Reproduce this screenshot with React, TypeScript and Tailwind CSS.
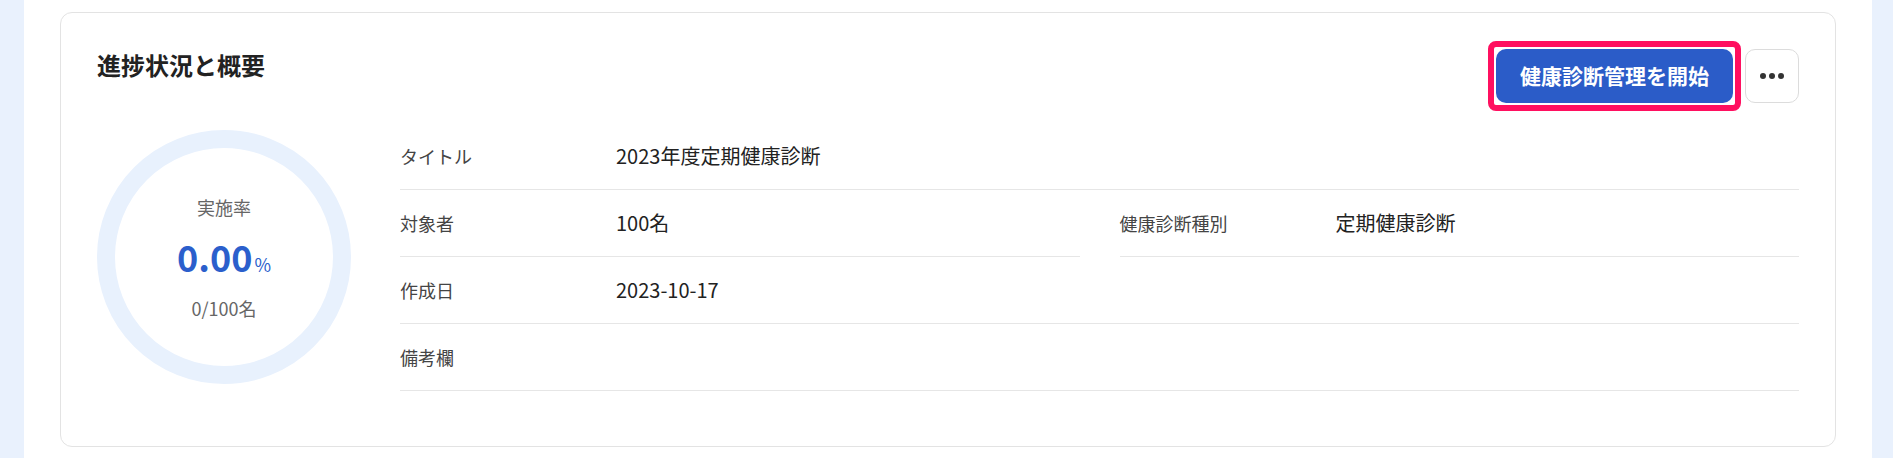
import React from 'react';

interface InfoRowProps {
  label: string;
  value?: string;
}

const InfoRow: React.FC<InfoRowProps> = ({ label, value }) => (
  <div className="flex items-center h-[67px] border-b border-[#e6e6e6]">
    <div className="w-[216px] shrink-0 text-[18px] text-[#444]">{label}</div>
    <div className="text-[20px] text-[#222]">{value}</div>
  </div>
);

const ProgressCircle: React.FC<{ done: number; total: number }> = ({ done, total }) => {
  const rate = total > 0 ? (done / total) * 100 : 0;
  return (
    <div className="w-[254px] h-[254px] shrink-0 rounded-full border-[18px] border-[#e8f1fd] flex flex-col items-center justify-center">
      <p className="text-[18px] leading-[26px] text-[#666]">実施率</p>
      <p className="mt-[14px] leading-[44px] text-[#2b5fcc]">
        <span className="text-[36px] font-bold">{rate.toFixed(2)}</span>
        <span className="text-[18px] ml-0.5">%</span>
      </p>
      <p className="mt-2 text-[18px] leading-[26px] text-[#666]">
        {done}/{total}名
      </p>
    </div>
  );
};

export default function App() {
  return (
    <div className="min-h-screen bg-[#e9f1fd] pl-6 pr-[21px] flex font-['Noto_Sans_CJK_JP','Noto_Sans',sans-serif]">
      <div className="flex-1 min-h-screen bg-white px-9 pt-3 pb-3">
        <div className="border border-[#e3e3e3] rounded-xl p-9 pb-[35px]">
          {/* header */}
          <div className="flex items-start justify-between">
            <h2 className="text-[24px] leading-8 font-bold text-[#222]">進捗状況と概要</h2>
            <div className="flex items-center gap-3">
              {/* highlight frame around the primary action */}
              <span className="-m-2 flex rounded-[8px] border-[6px] border-[#ff1060] bg-white p-[2px]">
                <button className="h-[54px] px-6 rounded-[10px] bg-[#2b5cc8] text-white text-[21px] font-bold">
                  健康診断管理を開始
                </button>
              </span>
              <button
                className="w-[54px] h-[54px] rounded-[10px] border border-[#dcdcdc] bg-white flex items-center justify-center gap-[3px]"
                aria-label="more"
              >
                <span className="w-[6px] h-[6px] rounded-full bg-[#333]" />
                <span className="w-[6px] h-[6px] rounded-full bg-[#333]" />
                <span className="w-[6px] h-[6px] rounded-full bg-[#333]" />
              </button>
            </div>
          </div>

          {/* body */}
          <div className="flex items-center gap-[49px] pt-5 pb-5">
            <ProgressCircle done={0} total={100} />
            <div className="flex-1 flex flex-col">
              <InfoRow label="タイトル" value="2023年度定期健康診断" />
              <div className="grid grid-cols-2 gap-10">
                <InfoRow label="対象者" value="100名" />
                <InfoRow label="健康診断種別" value="定期健康診断" />
              </div>
              <InfoRow label="作成日" value="2023-10-17" />
              <InfoRow label="備考欄" />
            </div>
          </div>
        </div>
      </div>
    </div>
  );
}
